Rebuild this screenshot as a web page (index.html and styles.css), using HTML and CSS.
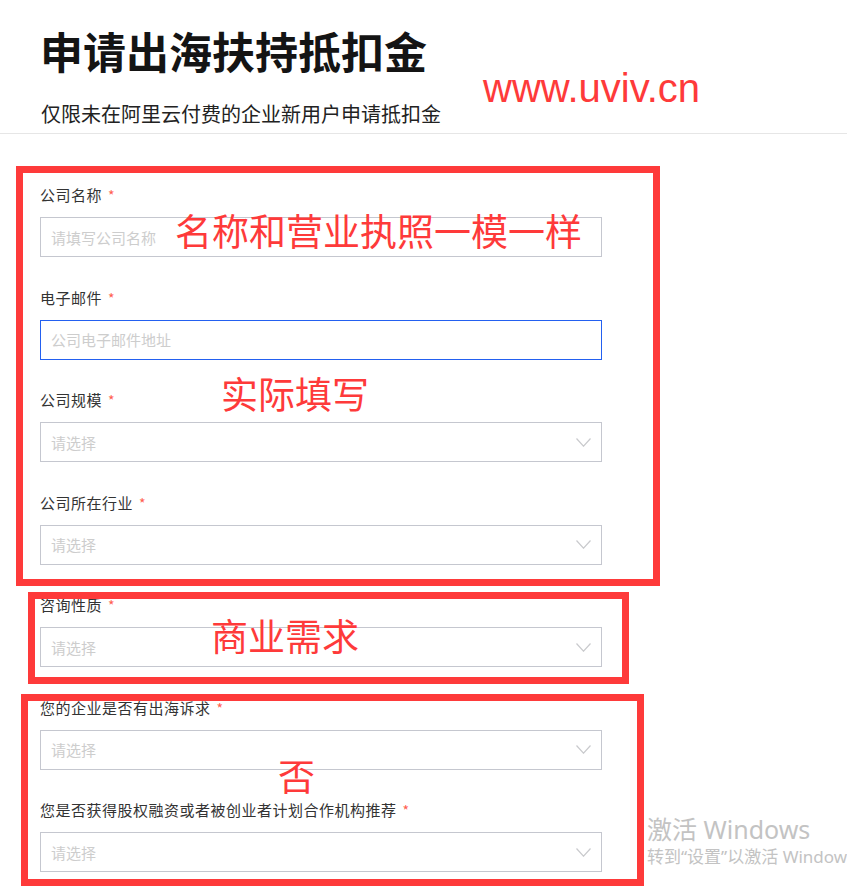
FILE: index.html
```html
<!DOCTYPE html>
<html lang="zh-CN">
<head>
<meta charset="utf-8">
<title>申请出海扶持抵扣金</title>
<link rel="stylesheet" href="styles.css">
</head>
<body>
  <header class="page-header">
    <h1 class="title">申请出海扶持抵扣金</h1>
    <p class="subtitle">仅限未在阿里云付费的企业新用户申请抵扣金</p>
  </header>

  <main class="form">
    <div class="field">
      <label class="label">公司名称 <span class="req">*</span></label>
      <div class="control"><span class="ph">请填写公司名称</span></div>
    </div>
    <div class="field">
      <label class="label">电子邮件 <span class="req">*</span></label>
      <div class="control control-focus"><span class="ph">公司电子邮件地址</span></div>
    </div>
    <div class="field">
      <label class="label">公司规模 <span class="req">*</span></label>
      <div class="control"><span class="ph">请选择</span><svg class="chev" width="15" height="9" viewBox="0 0 15 9"><polyline points="0.5,0.5 7.5,8.2 14.5,0.5" fill="none" stroke="#c9cacd" stroke-width="1.2"/></svg></div>
    </div>
    <div class="field">
      <label class="label">公司所在行业 <span class="req">*</span></label>
      <div class="control"><span class="ph">请选择</span><svg class="chev" width="15" height="9" viewBox="0 0 15 9"><polyline points="0.5,0.5 7.5,8.2 14.5,0.5" fill="none" stroke="#c9cacd" stroke-width="1.2"/></svg></div>
    </div>
    <div class="field">
      <label class="label">咨询性质 <span class="req">*</span></label>
      <div class="control"><span class="ph">请选择</span><svg class="chev" width="15" height="9" viewBox="0 0 15 9"><polyline points="0.5,0.5 7.5,8.2 14.5,0.5" fill="none" stroke="#c9cacd" stroke-width="1.2"/></svg></div>
    </div>
    <div class="field">
      <label class="label">您的企业是否有出海诉求 <span class="req">*</span></label>
      <div class="control"><span class="ph">请选择</span><svg class="chev" width="15" height="9" viewBox="0 0 15 9"><polyline points="0.5,0.5 7.5,8.2 14.5,0.5" fill="none" stroke="#c9cacd" stroke-width="1.2"/></svg></div>
    </div>
    <div class="field field-last">
      <label class="label">您是否获得股权融资或者被创业者计划合作机构推荐 <span class="req">*</span></label>
      <div class="control"><span class="ph">请选择</span><svg class="chev" width="15" height="9" viewBox="0 0 15 9"><polyline points="0.5,0.5 7.5,8.2 14.5,0.5" fill="none" stroke="#c9cacd" stroke-width="1.2"/></svg></div>
    </div>
  </main>

  <div class="mark mark-box box-1"></div>
  <div class="mark mark-box box-2"></div>
  <div class="mark mark-box box-3"></div>

  <div class="mark note note-1">名称和营业执照一模一样</div>
  <div class="mark note note-2">实际填写</div>
  <div class="mark note note-3">商业需求</div>
  <div class="mark note note-4">否</div>
  <div class="mark site">www.uviv.cn</div>

  <div class="activate">
    <div class="activate-title">激活 Windows</div>
    <div class="activate-sub">转到“设置”以激活 Windows。</div>
  </div>
</body>
</html>
```
FILE: styles.css
```css
html, body {
  margin: 0;
  padding: 0;
  background: #fff;
  overflow: hidden;
}

body {
  position: relative;
  height: 894px;
  font-family: "Noto Sans CJK SC", "Noto Sans", sans-serif;
  color: #333;
}

.page-header {
  padding: 25px 0 5px 40px;
  border-bottom: 1px solid #e6e6e6;
}

.title {
  margin: 0;
  font-size: 43px;
  line-height: 50px;
  font-weight: 700;
  color: #141414;
}

.subtitle {
  margin: 25px 0 0;
  padding-left: 1px;
  font-size: 20px;
  line-height: 28px;
  color: #222;
}

.form {
  width: 562px;
  padding: 50px 0 0 40px;
}

.field {
  margin-bottom: 29.5px;
}

.field-last {
  margin-bottom: 0;
}

.label {
  display: block;
  margin-bottom: 11px;
  font-size: 15px;
  letter-spacing: 0.5px;
  line-height: 22px;
  color: #333;
}

.req {
  color: #ff5e4f;
  font-size: 14px;
  margin-left: 2px;
}

.control {
  box-sizing: border-box;
  height: 40px;
  display: flex;
  align-items: center;
  justify-content: space-between;
  padding: 0 10px;
  border: 1px solid #c5c7cf;
  background: #fff;
}

.control-focus {
  border-color: #2360f0;
}

.ph {
  font-size: 15px;
  color: #cdcdcd;
}

.chev {
  display: block;
}

/* annotation overlays drawn on top of the form */
.mark {
  position: absolute;
}

.mark-box {
  box-sizing: border-box;
  border: 7px solid #fe3a3a;
}

.box-1 { left: 16px; top: 166px; width: 644px; height: 420px; }
.box-2 { left: 28px; top: 592px; width: 601px; height: 92px; }
.box-3 { left: 21px; top: 694px; width: 623px; height: 192px; }

.note {
  font-size: 37px;
  line-height: 1;
  color: #fe3a3a;
  white-space: nowrap;
}

.note-1 { left: 175px; top: 212px; }
.note-2 { left: 221px; top: 375px; }
.note-3 { left: 211px; top: 617px; }
.note-4 { left: 278px; top: 757px; }

.site {
  left: 483px;
  top: 66px;
  font-family: "Liberation Sans", Arial, sans-serif;
  font-size: 40px;
  line-height: 44px;
  color: #fe3a3a;
}

.activate {
  position: absolute;
  left: 647px;
  top: 813px;
  width: 200px;
  overflow: hidden;
  white-space: nowrap;
  color: #c3c3c3;
  font-family: "Noto Sans", "Noto Sans CJK SC", sans-serif;
}

.activate-title {
  font-size: 25px;
  line-height: 33px;
}

.activate-sub {
  font-size: 17px;
  line-height: 22px;
}
```
